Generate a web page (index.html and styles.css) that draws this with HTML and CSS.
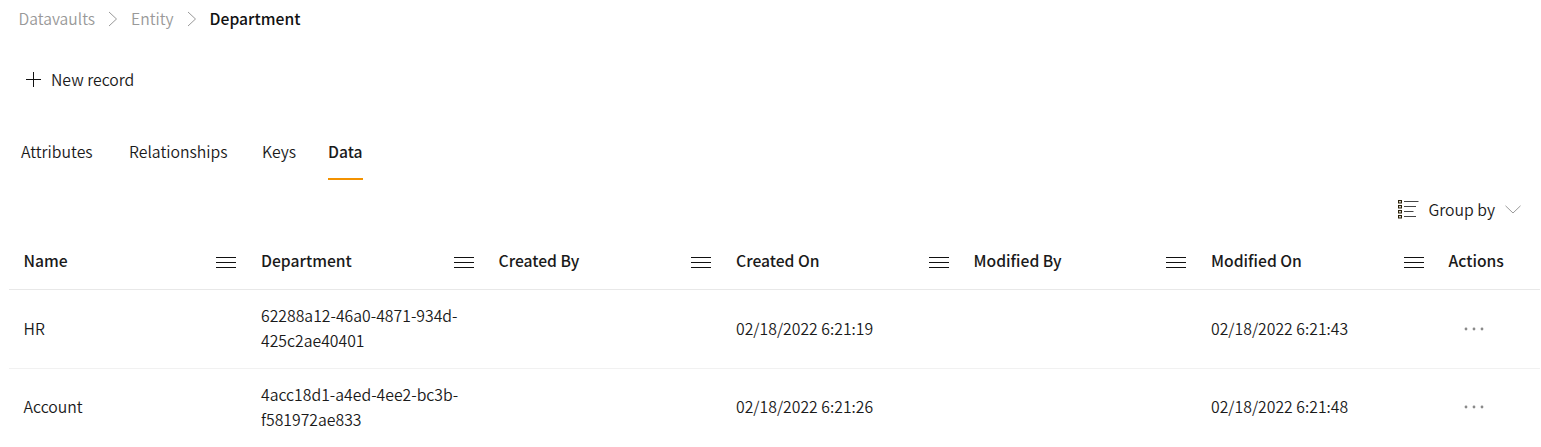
FILE: index.html
```
<!DOCTYPE html>
<html lang="en">
<head>
<meta charset="utf-8">
<title>Department</title>
<link rel="stylesheet" href="styles.css">
</head>
<body>
<svg class="defs" width="0" height="0">
  <symbol id="menu" viewBox="0 0 20 12"><path d="M0 .5H20M0 5.5H20M0 10.5H20" fill="none" stroke="#111"/></symbol>
  <symbol id="chevron" viewBox="0 0 10 16"><path d="M1 1L8.5 8L1 15" fill="none" stroke="#999"/></symbol>
  <symbol id="dots" viewBox="0 0 20 4"><g fill="#8a8a8a"><circle cx="2" cy="2" r="1.4"/><circle cx="10" cy="2" r="1.4"/><circle cx="18" cy="2" r="1.4"/></g></symbol>
</svg>
<nav class="breadcrumb">
  <a>Datavaults</a><svg class="sep"><use href="#chevron"/></svg><a>Entity</a><svg class="sep"><use href="#chevron"/></svg><span class="current">Department</span>
</nav>
<div class="toolbar">
  <svg class="plus" viewBox="0 0 15 15"><path d="M0 7.5H15M7.5 0V15" fill="none" stroke="#111"/></svg><span>New record</span>
</div>
<div class="tabs">
  <a class="tab attributes">Attributes</a><a class="tab relationships">Relationships</a><a class="tab keys">Keys</a><a class="tab active">Data</a>
</div>
<div class="grouping">
  <svg class="list" viewBox="0 0 21 20"><path d="M6 2.5H20.500M6 7.5H18M6 12.5H15.5M6 17.5H18" fill="none" stroke="#444"/><path d="M.6 1.5H3.4V4H.6ZM.6 6.500H3.4V9H.6ZM.6 11.5H3.4V14H.6ZM.6 16.5H3.4V19H.6Z" fill="none" stroke="#2a2008" stroke-width="1.2"/></svg>
  <span>Group by</span>
  <svg class="down" viewBox="0 0 16 9"><path d="M.5 .8L8 8L15.5 .8" fill="none" stroke="#999"/></svg>
</div>
<div class="table">
  <div class="row head">
    <div class="cell"><span>Name</span><svg class="menu"><use href="#menu"/></svg></div>
    <div class="cell"><span>Department</span><svg class="menu"><use href="#menu"/></svg></div>
    <div class="cell"><span>Created By</span><svg class="menu"><use href="#menu"/></svg></div>
    <div class="cell"><span>Created On</span><svg class="menu"><use href="#menu"/></svg></div>
    <div class="cell"><span>Modified By</span><svg class="menu"><use href="#menu"/></svg></div>
    <div class="cell"><span>Modified On</span><svg class="menu"><use href="#menu"/></svg></div>
    <div class="cell"><span>Actions</span></div>
  </div>
  <div class="row">
    <div class="cell">HR</div>
    <div class="cell"><span>62288a12-46a0-4871-934d-<br>425c2ae40401</span></div>
    <div class="cell"></div>
    <div class="cell">02/18/2022 6:21:19</div>
    <div class="cell"></div>
    <div class="cell">02/18/2022 6:21:43</div>
    <div class="cell"><svg class="dots"><use href="#dots"/></svg></div>
  </div>
  <div class="row last">
    <div class="cell">Account</div>
    <div class="cell"><span>4acc18d1-a4ed-4ee2-bc3b-<br>f581972ae833</span></div>
    <div class="cell"></div>
    <div class="cell">02/18/2022 6:21:26</div>
    <div class="cell"></div>
    <div class="cell">02/18/2022 6:21:48</div>
    <div class="cell"><svg class="dots"><use href="#dots"/></svg></div>
  </div>
</div>
</body>
</html>
```
FILE: styles.css
```
* { box-sizing: border-box; }
body {
  margin: 0;
  height: 447px;
  overflow: hidden;
  background: #fff;
  color: #1a1a1a;
  font: 350 15.8px/25px "Noto Sans CJK SC", sans-serif;
}
svg { display: block; flex: none; }
.defs { position: absolute; }
.breadcrumb { display: flex; align-items: center; height: 39px; padding: 0 0 3px 18.5px; color: #999; font-size: 15.7px; }
.sep { width: 10px; height: 16px; margin: 2px 13px 0; }
.current { color: #111; font-weight: 500; }
.toolbar { display: flex; align-items: center; gap: 10px; height: 80px; padding: 1px 0 0 26px; }
.plus { width: 15px; height: 15px; }
.tabs { display: flex; height: 61px; padding: 20px 0 0 21px; }
.tab { height: 41px; }
.attributes { width: 108px; }
.relationships { width: 133px; }
.keys { width: 66px; }
.active { width: 35px; font-size: 15.7px; font-weight: 500; border-bottom: 2px solid #f39200; }
.grouping { display: flex; align-items: center; justify-content: flex-end; height: 53px; padding: 6px 20px 0 0; }
.list { width: 21px; height: 20px; margin: 0 9px 2px 0; }
.down { width: 16px; height: 9px; margin-left: 10px; }
.table { margin: 0 1px 0 9px; }
.row { display: grid; grid-template-columns: repeat(6, 237.5px) 1fr; height: 79px; padding-bottom: 2px; border-bottom: 1px solid #f1f1f1; }
.last { height: 78px; padding-bottom: 3px; border: 0; }
.cell { display: flex; align-items: center; padding: 0 10.5px 0 14.5px; }
.head { height: 57px; font-size: 15.7px; font-weight: 500; border-color: #e8e8e8; }
.head .cell { justify-content: space-between; }
.menu { width: 20px; height: 12px; margin-top: 5px; }
.dots { width: 20px; height: 4px; margin: 1px 0 0 15px; }
```
